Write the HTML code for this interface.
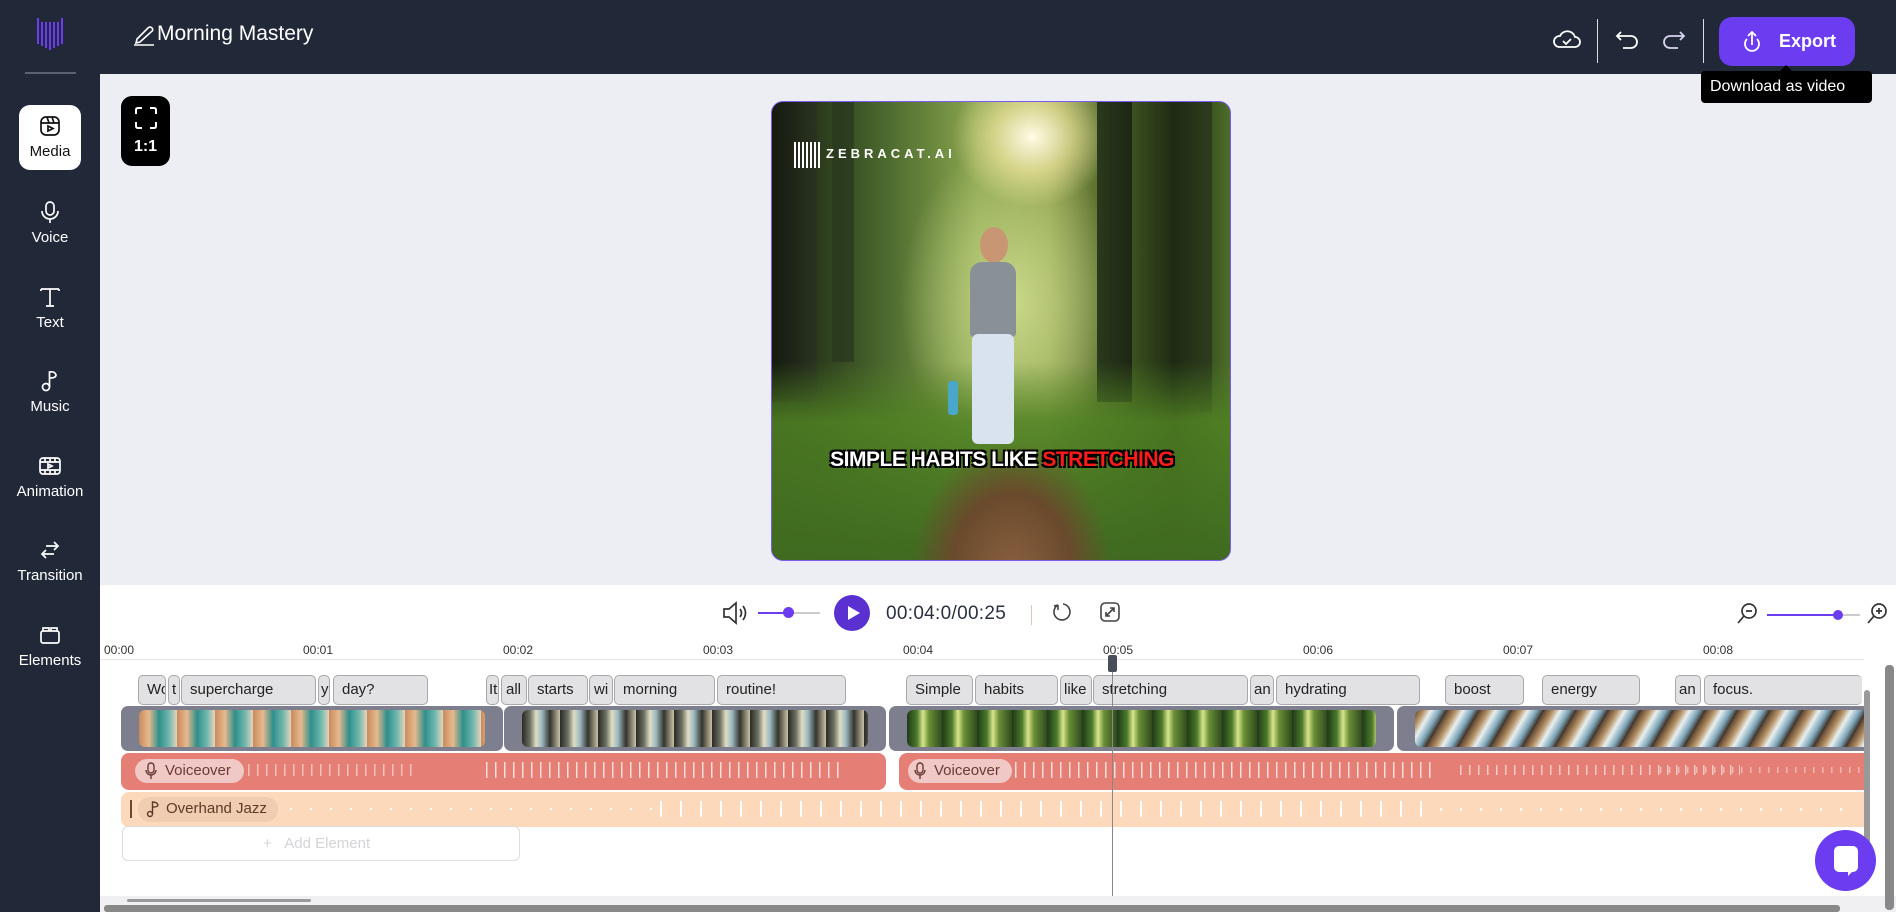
<!DOCTYPE html>
<html><head><meta charset="utf-8"><style>
*{box-sizing:border-box;margin:0;padding:0}
body{width:1896px;height:912px;overflow:hidden;background:#eceef3;font-family:"Liberation Sans",sans-serif;position:relative}
.abs{position:absolute}
#top{left:0;top:0;width:1896px;height:74px;background:#212939}
#side{left:0;top:74px;width:100px;height:838px;background:#212939}
.si{position:absolute;left:0;width:100px;text-align:center;color:#fff;font-size:15px}
.si svg{display:block;margin:0 auto 5px}
#tl{left:100px;top:585px;width:1796px;height:327px;background:#fff}
.chip{position:absolute;top:675px;height:30px;background:#e2e2e4;border:1px solid #a9a9ad;border-radius:5px;font-size:15px;color:#222;padding:5px 0 0 8px;overflow:hidden;white-space:nowrap}
.vs{position:absolute;top:706px;height:45px;background:#7d7f8f;border-radius:7px}
.th{position:absolute;top:4px;bottom:4px;left:18px;right:18px;border-radius:6px}
.ruler{position:absolute;top:643px;font-size:12px;color:#333}
.wave{position:absolute;height:16px;background:repeating-linear-gradient(90deg,rgba(255,255,255,.75) 0 1.5px,transparent 1.5px 9px)}
</style></head><body>
<div id="top" class="abs"></div>
<div id="side" class="abs"></div>
<svg class="abs" style="left:36px;top:16px" width="28" height="36" viewBox="0 0 28 36"><g stroke="#6b3cf0" stroke-width="2"><line x1="2" y1="2" x2="2" y2="28"/><line x1="6" y1="6" x2="6" y2="30"/><line x1="10" y1="6" x2="10" y2="32"/><line x1="14" y1="6" x2="14" y2="34"/><line x1="18" y1="6" x2="18" y2="32"/><line x1="22" y1="6" x2="22" y2="30"/><line x1="26" y1="2" x2="26" y2="28"/></g></svg>
<div class="abs" style="left:25px;top:72px;width:51px;height:2px;background:#5b6272"></div>
<svg class="abs" style="left:133px;top:24px" width="22" height="22" viewBox="0 0 22 22" fill="none" stroke="#fff" stroke-width="1.6"><path d="M4 15 L15 4 Q17 2 19 4 Q21 6 18 8 L7 18 L3 19 Z"/><line x1="1" y1="21" x2="21" y2="21"/></svg>
<div class="abs" style="left:157px;top:22px;color:#fff;font-size:21px">Morning Mastery</div>
<svg class="abs" style="left:1552px;top:28px" width="30" height="22" viewBox="0 0 30 22" fill="none" stroke="#fff" stroke-width="1.8"><path d="M7 19 H23 A5 5 0 0 0 23 9 A8 8 0 0 0 8 8 A5.5 5.5 0 0 0 7 19 Z"/><path d="M11 13 l3 3 l5 -5"/></svg>
<div class="abs" style="left:1597px;top:19px;width:1px;height:44px;background:#ddd"></div>
<svg class="abs" style="left:1615px;top:29px" width="26" height="24" viewBox="0 0 26 24" fill="none" stroke="#fff" stroke-width="1.8"><path d="M6 3 L2 7 L6 11"/><path d="M2 7 H16 A6 6 0 0 1 16 19 H8"/></svg>
<div class="abs" style="left:1660px;top:29px"><svg width="26" height="24" viewBox="0 0 26 24" fill="none" stroke="#d8d4ee" stroke-width="1.8"><path d="M20 3 L24 7 L20 11"/><path d="M24 7 H10 A6 6 0 0 0 10 19 H18"/></svg></div>
<div class="abs" style="left:1703px;top:19px;width:1px;height:44px;background:#ddd"></div>
<div class="abs" style="left:1719px;top:17px;width:136px;height:49px;background:#6c3cf0;border-radius:13px;color:#fff;font-weight:bold;font-size:18px;padding:14px 0 0 60px">Export</div>
<svg class="abs" style="left:1740px;top:30px" width="24" height="24" viewBox="0 0 24 24" fill="none" stroke="#fff" stroke-width="1.8"><path d="M7 9 A7 7 0 1 0 17 9"/><path d="M12 15 V2 M8 6 L12 2 L16 6"/></svg>
<div class="abs" style="left:1780px;top:65px;width:0;height:0;border-left:6px solid transparent;border-right:6px solid transparent;border-bottom:6px solid #000"></div>
<div class="abs" style="left:1701px;top:71px;width:171px;height:32px;background:#000;border-radius:4px;color:#fff;font-size:16px;padding:7px 0 0 9px">Download as video</div>
<div class="abs" style="left:19px;top:105px;width:62px;height:65px;background:#fff;border-radius:11px"></div>
<div class="si" style="top:114px;color:#111"><svg width="24" height="24" viewBox="0 0 24 24" fill="none" stroke="#111" stroke-width="1.7"><rect x="3" y="3" width="18" height="18" rx="5"/><line x1="3" y1="9" x2="21" y2="9"/><line x1="9" y1="3" x2="11" y2="9"/><line x1="14" y1="3" x2="16" y2="9"/><path d="M10 12 L15 14.5 L10 17 Z"/></svg>Media</div>
<div class="si" style="top:200px"><svg width="24" height="24" viewBox="0 0 24 24" fill="none" stroke="#fff" stroke-width="1.7"><rect x="8" y="2" width="8" height="13" rx="4"/><path d="M4 11 A8 8 0 0 0 20 11"/><line x1="12" y1="19" x2="12" y2="23"/></svg>Voice</div>
<div class="si" style="top:285px"><svg width="24" height="24" viewBox="0 0 24 24" fill="none" stroke="#fff" stroke-width="1.7"><path d="M3 4 H21 M3 4 V6 M21 4 V6 M12 4 V21 M8 21 H16"/></svg>Text</div>
<div class="si" style="top:369px"><svg width="24" height="24" viewBox="0 0 24 24" fill="none" stroke="#fff" stroke-width="1.7"><circle cx="8" cy="18" r="3.5"/><path d="M11.5 18 V3 Q17 2 18 6 Q18 9 12 9"/></svg>Music</div>
<div class="si" style="top:454px"><svg width="24" height="24" viewBox="0 0 24 24" fill="none" stroke="#fff" stroke-width="1.7"><rect x="2" y="4" width="20" height="16" rx="3"/><path d="M2 8 H22 M2 16 H22 M7 4 V8 M12 4 V8 M17 4 V8 M7 16 V20 M12 16 V20 M17 16 V20"/><path d="M10 10 L14 12 L10 14 Z"/></svg>Animation</div>
<div class="si" style="top:538px"><svg width="24" height="24" viewBox="0 0 24 24" fill="none" stroke="#fff" stroke-width="1.7"><path d="M16 4 L20 8 L16 12 M20 8 H8 M8 12 L4 16 L8 20 M4 16 H16"/></svg>Transition</div>
<div class="si" style="top:623px"><svg width="24" height="24" viewBox="0 0 24 24" fill="none" stroke="#fff" stroke-width="1.7"><rect x="3" y="8" width="18" height="12" rx="2"/><path d="M5 8 V5 H11 V8 M13 8 V5 H19 V8"/></svg>Elements</div>
<div class="abs" style="left:121px;top:96px;width:49px;height:70px;background:#000;border-radius:11px;color:#fff;font-size:16px;text-align:center;padding-top:42px;font-weight:bold">1:1</div>
<svg class="abs" style="left:134px;top:106px" width="24" height="24" viewBox="0 0 24 24" fill="none" stroke="#fff" stroke-width="2"><path d="M2 8 V4 Q2 2 4 2 H8 M16 2 H20 Q22 2 22 4 V8 M22 16 V20 Q22 22 20 22 H16 M8 22 H4 Q2 22 2 20 V16"/></svg>
<div class="abs" style="left:771px;top:101px;width:460px;height:460px;border-radius:12px;overflow:hidden;border:1px solid #7a5cf0;background:radial-gradient(ellipse 80px 70px at 260px 35px,#fffbe6,rgba(255,240,170,.6) 50%,transparent),radial-gradient(ellipse 140px 200px at 240px 200px,#c9d98a,transparent 80%),linear-gradient(90deg,#1d2a16 0,#2b3a1c 10%,#4c6a2e 25%,#8aa54e 45%,#8fa14c 60%,#3d5420 78%,#1e2913 88%,#4d6d2a 100%)">
<div class="abs" style="left:0;top:0;width:45px;height:300px;background:linear-gradient(90deg,#151a10,#2a3320)"></div>
<div class="abs" style="left:60px;top:0;width:22px;height:260px;background:rgba(40,55,30,.7)"></div>
<div class="abs" style="left:325px;top:0;width:35px;height:300px;background:linear-gradient(90deg,#2a3a1c,#1d2614)"></div>
<div class="abs" style="left:400px;top:0;width:40px;height:310px;background:linear-gradient(90deg,#1e2a14,#2e3d1e)"></div>
<div class="abs" style="left:0;top:260px;width:460px;height:200px;background:linear-gradient(180deg,transparent,rgba(80,130,35,.85) 30%,#3f6a20)"></div>
<div class="abs" style="left:130px;top:300px;width:220px;height:160px;background:radial-gradient(ellipse 100px 130px at 110px 170px,#8a6040,#6a4a2c 60%,transparent 100%)"></div>
<div class="abs" style="left:208px;top:125px;width:28px;height:36px;border-radius:50%;background:#c99674"></div>
<div class="abs" style="left:198px;top:160px;width:46px;height:75px;border-radius:12px 12px 4px 4px;background:#8a9196"></div>
<div class="abs" style="left:200px;top:232px;width:42px;height:110px;background:#d8e3ef;border-radius:6px"></div>
<div class="abs" style="left:176px;top:279px;width:10px;height:34px;background:#4aa7c9;border-radius:3px"></div>
<div class="abs" style="left:22px;top:40px;width:26px;height:26px;background:repeating-linear-gradient(90deg,#fff 0 2px,transparent 2px 4px)"></div>
<div class="abs" style="left:54px;top:44px;color:#fff;font-size:13px;font-weight:bold;letter-spacing:4px">ZEBRACAT.AI</div>
<div class="abs" style="left:0;top:346px;width:460px;text-align:center;font-size:21px;font-weight:bold;color:#fff;letter-spacing:-0.5px;text-shadow:-2px -2px 0 #000,2px -2px 0 #000,-2px 2px 0 #000,2px 2px 0 #000">SIMPLE HABITS LIKE <span style="color:#ff1a1a">STRETCHING</span></div>
</div>
<div id="tl" class="abs"></div>
<svg class="abs" style="left:722px;top:600px" width="30" height="26" viewBox="0 0 30 26" fill="none" stroke="#333" stroke-width="1.7"><path d="M2 9 H7 L14 3 V23 L7 17 H2 Z"/><path d="M18 9 Q21 13 18 17 M21 6 Q26 13 21 20"/></svg>
<div class="abs" style="left:758px;top:612px;width:62px;height:2px;background:#ccc"></div>
<div class="abs" style="left:758px;top:612px;width:31px;height:2px;background:#6c3cf0"></div>
<div class="abs" style="left:783px;top:607px;width:11px;height:11px;border-radius:50%;background:#6c3cf0"></div>
<div class="abs" style="left:834px;top:595px;width:36px;height:36px;border-radius:50%;background:#5a31d0"></div>
<svg class="abs" style="left:846px;top:604px" width="16" height="18" viewBox="0 0 16 18"><path d="M2 2 L14 9 L2 16 Z" fill="#fff"/></svg>
<div class="abs" style="left:886px;top:603px;font-size:19px;color:#2a3040;letter-spacing:.3px">00:04:0/00:25</div>
<div class="abs" style="left:1031px;top:605px;width:1px;height:20px;background:#d8c8c0"></div>
<svg class="abs" style="left:1052px;top:601px" width="22" height="22" viewBox="0 0 22 22" fill="none" stroke="#444" stroke-width="1.6"><path d="M6 4 A8 8 0 1 0 11 3 M6 4 L6 9 M6 4 L2 5"/></svg>
<svg class="abs" style="left:1099px;top:601px" width="22" height="22" viewBox="0 0 22 22" fill="none" stroke="#444" stroke-width="1.6"><rect x="2" y="2" width="18" height="18" rx="4"/><path d="M7 15 L15 7 M11 7 H15 V11 M7 11 V15 H11"/></svg>
<svg class="abs" style="left:1736px;top:601px" width="24" height="24" viewBox="0 0 24 24" fill="none" stroke="#333" stroke-width="1.7"><circle cx="13" cy="10" r="7"/><path d="M8 15 L2 22 M10 10 H16"/></svg>
<div class="abs" style="left:1767px;top:614px;width:93px;height:2px;background:#ccc"></div>
<div class="abs" style="left:1767px;top:614px;width:71px;height:2px;background:#6c3cf0"></div>
<div class="abs" style="left:1833px;top:610px;width:10px;height:10px;border-radius:50%;background:#6c3cf0"></div>
<svg class="abs" style="left:1866px;top:601px" width="24" height="24" viewBox="0 0 24 24" fill="none" stroke="#333" stroke-width="1.7"><circle cx="13" cy="10" r="7"/><path d="M8 15 L2 22 M10 10 H16 M13 7 V13"/></svg>
<div class="abs" style="left:100px;top:659px;width:1764px;height:1px;background:#e6e6e6"></div>
<div class="ruler" style="left:104px">00:00</div><div class="ruler" style="left:303px">00:01</div><div class="ruler" style="left:503px">00:02</div><div class="ruler" style="left:703px">00:03</div><div class="ruler" style="left:903px">00:04</div><div class="ruler" style="left:1103px">00:05</div><div class="ruler" style="left:1303px">00:06</div><div class="ruler" style="left:1503px">00:07</div><div class="ruler" style="left:1703px">00:08</div>
<div class="chip" style="left:138px;width:28px">Wo</div><div class="chip" style="left:168px;width:12px;padding-left:3px">t</div><div class="chip" style="left:181px;width:135px">supercharge</div><div class="chip" style="left:318px;width:12px;padding-left:2px">y</div><div class="chip" style="left:333px;width:95px">day?</div>
<div class="chip" style="left:486px;width:13px;padding-left:2px">It</div><div class="chip" style="left:501px;width:26px;padding-left:4px">all</div><div class="chip" style="left:528px;width:60px">starts</div><div class="chip" style="left:589px;width:24px;padding-left:4px">wi</div><div class="chip" style="left:614px;width:101px">morning</div><div class="chip" style="left:717px;width:129px">routine!</div>
<div class="chip" style="left:906px;width:67px">Simple</div><div class="chip" style="left:975px;width:83px">habits</div><div class="chip" style="left:1060px;width:32px;padding-left:3px">like</div><div class="chip" style="left:1093px;width:155px">stretching</div><div class="chip" style="left:1250px;width:24px;padding-left:3px">an</div><div class="chip" style="left:1276px;width:144px">hydrating</div><div class="chip" style="left:1445px;width:79px">boost</div><div class="chip" style="left:1542px;width:98px">energy</div><div class="chip" style="left:1675px;width:26px;padding-left:3px">an</div><div class="chip" style="left:1704px;width:158px;border-right:none">focus.</div>
<div class="vs" style="left:121px;width:382px"><div class="th" style="background:repeating-linear-gradient(90deg,#c98b5d 0,#e6b98e 10px,#2f8f8a 20px,#6fb7ae 30px,#e7d4bd 38px)"></div></div>
<div class="vs" style="left:504px;width:382px"><div class="th" style="background:repeating-linear-gradient(90deg,#2a2a26 0,#6b7060 8px,#e0ddc4 14px,#9bb8c0 20px,#34342c 28px,#c9c2a6 38px)"></div></div>
<div class="vs" style="left:889px;width:505px"><div class="th" style="background:repeating-linear-gradient(90deg,#1f3a18 0,#4c7a2a 10px,#d9e58c 16px,#6a8f36 22px,#2f4a1e 35px)"></div></div>
<div class="vs" style="left:1397px;width:470px;border-radius:7px 0 0 7px"><div class="th" style="right:0;border-radius:6px 0 0 6px;background:repeating-linear-gradient(120deg,#5b4330 0,#b89468 8px,#e8f0f0 14px,#7aa3b8 22px,#3c2e22 28px)"></div></div>
<div class="abs" style="left:121px;top:753px;width:765px;height:37px;background:#e57e74;border-radius:8px"></div>
<div class="abs" style="left:899px;top:753px;width:967px;height:37px;background:#e57e74;border-radius:8px 0 0 8px"></div>
<div class="abs" style="left:135px;top:759px;width:109px;height:24px;background:#f0c9c6;border-radius:12px;font-size:15px;color:#6b3a35;padding:3px 0 0 30px">Voiceover</div>
<svg class="abs" style="left:145px;top:762px" width="12" height="18" viewBox="0 0 12 18" fill="none" stroke="#6b3a35" stroke-width="1.4"><rect x="3" y="1" width="6" height="10" rx="3"/><path d="M1 8 A5 5 0 0 0 11 8 M6 13 V17"/></svg>
<div class="abs" style="left:908px;top:759px;width:104px;height:24px;background:#f0c9c6;border-radius:12px;font-size:15px;color:#6b3a35;padding:3px 0 0 26px">Voiceover</div>
<svg class="abs" style="left:914px;top:762px" width="12" height="18" viewBox="0 0 12 18" fill="none" stroke="#6b3a35" stroke-width="1.4"><rect x="3" y="1" width="6" height="10" rx="3"/><path d="M1 8 A5 5 0 0 0 11 8 M6 13 V17"/></svg>
<div class="wave" style="left:248px;top:764px;width:170px;height:12px;opacity:.7"></div>
<div class="wave" style="left:486px;top:762px;width:360px"></div>
<div class="wave" style="left:1015px;top:762px;width:420px"></div>
<div class="wave" style="left:1460px;top:765px;width:280px;height:10px;opacity:.8"></div>
<div class="wave" style="left:1660px;top:767px;width:200px;height:6px;opacity:.6"></div>
<div class="abs" style="left:121px;top:792px;width:1745px;height:35px;background:#fbd9ba;border-radius:8px 0 0 8px"></div>
<div class="abs" style="left:130px;top:800px;width:2px;height:18px;background:#6b4a35"></div>
<div class="abs" style="left:138px;top:797px;width:140px;height:25px;background:#f0ccb0;border-radius:12px;font-size:15px;color:#5b3a28;padding:3px 0 0 28px">Overhand Jazz</div>
<svg class="abs" style="left:146px;top:800px" width="14" height="18" viewBox="0 0 14 18" fill="none" stroke="#5b3a28" stroke-width="1.4"><circle cx="4" cy="14" r="2.5"/><path d="M6.5 14 V2 Q11 2 12 5 Q12 7 7 7"/></svg>
<div class="abs" style="left:290px;top:808px;width:370px;height:2px;background:repeating-linear-gradient(90deg,#fff 0 2px,transparent 2px 20px)"></div>
<div class="abs" style="left:660px;top:801px;width:780px;height:16px;background:repeating-linear-gradient(90deg,#fff 0 2px,transparent 2px 20px)"></div>
<div class="abs" style="left:1440px;top:808px;width:420px;height:3px;background:repeating-linear-gradient(90deg,#fff 0 2px,transparent 2px 20px)"></div>
<div class="abs" style="left:122px;top:826px;width:398px;height:35px;border:1px solid #ddd;border-radius:6px;color:#d4d4d8;font-size:15px;padding:8px 0 0 140px">+&nbsp;&nbsp;&nbsp;Add Element</div>
<div class="abs" style="left:1112px;top:660px;width:1px;height:252px;background:#888"></div>
<div class="abs" style="left:1108px;top:655px;width:9px;height:17px;background:#4a4d5a;border-radius:2px"></div>
<div class="abs" style="left:100px;top:896px;width:1796px;height:16px;background:#f0f0f2"></div>
<div class="abs" style="left:127px;top:899px;width:184px;height:3px;background:#999;border-radius:2px"></div>
<div class="abs" style="left:104px;top:905px;width:1736px;height:7px;background:#888;border-radius:3px"></div>
<div class="abs" style="left:1885px;top:665px;width:9px;height:245px;background:#888;border-radius:4px"></div>
<div class="abs" style="left:1864px;top:690px;width:6px;height:190px;background:#999;border-radius:3px"></div>
<div class="abs" style="left:1815px;top:830px;width:61px;height:61px;border-radius:50%;background:#6c3cf0"></div>
<div class="abs" style="left:1834px;top:846px;width:24px;height:26px;background:#fff;border-radius:5px"></div>
<div class="abs" style="left:1848px;top:868px;width:0;height:0;border-left:8px solid #fff;border-bottom:8px solid transparent"></div>
</body></html>
